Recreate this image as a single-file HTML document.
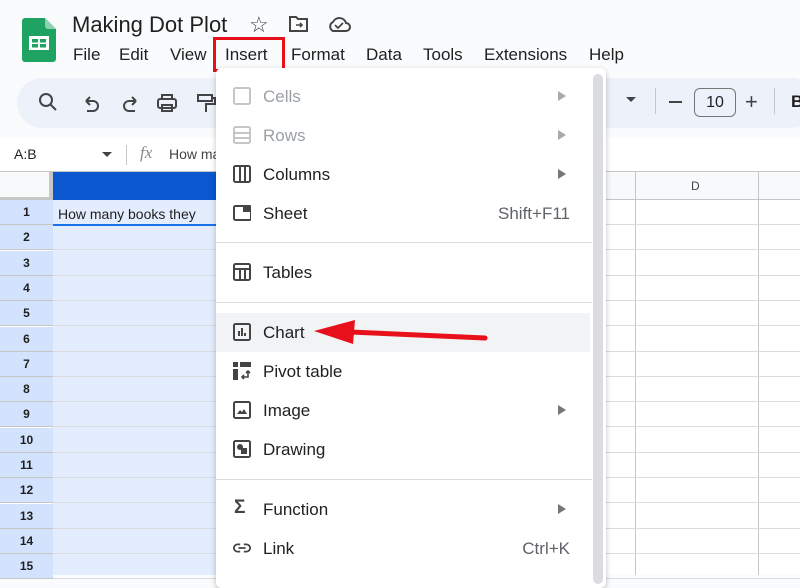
<!DOCTYPE html>
<html><head><style>
*{margin:0;padding:0;box-sizing:border-box}
body{width:800px;height:575px;overflow:hidden;background:#f9fbfd;font-family:"Liberation Sans",Arial,sans-serif;position:relative;color:#1f1f1f}
.abs{position:absolute}
.menuitem{position:absolute;left:0;width:376px;height:39px;font-size:17px;color:#202124}
.menuitem .t{position:absolute;left:47px;top:10px}
.menuitem .ic{position:absolute;left:17px;top:10px;width:18px;height:18px}
.menuitem .arr{position:absolute;right:26px;top:14px;width:0;height:0;border-left:8px solid #777;border-top:5px solid transparent;border-bottom:5px solid transparent}
.menuitem .sc{position:absolute;right:22px;top:10px;color:#5f6368}
.sep{position:absolute;left:0;width:376px;height:1px;background:#dadce0}
.rn{position:absolute;left:0;width:53px;height:25px;font-size:12px;font-weight:bold;color:#1f1f1f;text-align:center;line-height:25px;background:#d3e3fd;border-bottom:1px solid #c4c7c5}
</style></head><body>
<svg class="abs" style="left:22px;top:18px" width="34" height="44" viewBox="0 0 34 44"><path d="M3 0h20l11 11v30a3 3 0 0 1-3 3H3a3 3 0 0 1-3-3V3a3 3 0 0 1 3-3z" fill="#1ea362"/><path d="M23 0l11 11H26a3 3 0 0 1-3-3z" fill="#8ed1b1"/><rect x="7" y="18" width="20" height="14" fill="#fff"/><rect x="10" y="21" width="6" height="3.5" fill="#1ea362"/><rect x="18" y="21" width="6" height="3.5" fill="#1ea362"/><rect x="10" y="26" width="6" height="3.5" fill="#1ea362"/><rect x="18" y="26" width="6" height="3.5" fill="#1ea362"/></svg>
<div class="abs" style="left:72px;top:12px;font-size:22px;color:#1f1f1f">Making Dot Plot</div>
<div class="abs" style="left:249px;top:12px;font-size:22px;color:#444">☆</div>
<svg class="abs" style="left:289px;top:15px" width="20" height="18" viewBox="0 0 20 18"><path d="M1 2h6l2 2h9v12H1z" fill="none" stroke="#444" stroke-width="2"/><path d="M7 10h6M11 8l2 2-2 2" stroke="#444" stroke-width="1.6" fill="none"/></svg>
<svg class="abs" style="left:327px;top:15px" width="24" height="18" viewBox="0 0 24 18"><path d="M6 16h13a4 4 0 0 0 0-8 7 7 0 0 0-13-1A5 5 0 0 0 6 16z" fill="none" stroke="#444" stroke-width="2"/><path d="M8 10l3 3 5-5" fill="none" stroke="#444" stroke-width="1.8"/></svg>
<div class="abs" style="top:45px;left:73px;font-size:17px;color:#1f1f1f;white-space:nowrap">
<span class="abs" style="left:0">File</span><span class="abs" style="left:46px">Edit</span><span class="abs" style="left:97px">View</span><span class="abs" style="left:152px">Insert</span><span class="abs" style="left:218px">Format</span><span class="abs" style="left:293px">Data</span><span class="abs" style="left:350px">Tools</span><span class="abs" style="left:411px">Extensions</span><span class="abs" style="left:516px">Help</span></div>
<div class="abs" style="left:213px;top:37px;width:72px;height:35px;border:3px solid #e8101a"></div>
<div class="abs" style="left:17px;top:78px;width:800px;height:50px;background:#edf2fa;border-radius:25px"></div>
<svg class="abs" style="left:38px;top:92px" width="200" height="22" viewBox="0 0 200 22" fill="none" stroke="#444" stroke-width="2"><circle cx="8" cy="8" r="6"/><path d="M12 12l6 6"/><path d="M48 9h7a5 5 0 0 1 0 10h-6M48 9l4-4M48 9l4 4"/><path d="M98 9h-7a5 5 0 0 0 0 10h6M98 9l-4-4M98 9l-4 4"/><rect x="120" y="7" width="18" height="9" rx="2"/><rect x="124" y="3" width="10" height="4"/><rect x="124" y="13" width="10" height="6"/><rect x="160" y="3" width="14" height="6"/><path d="M174 6h3v6h-9v8"/></svg>
<div class="abs" style="left:626px;top:97px;width:0;height:0;border-top:5px solid #444;border-left:5px solid transparent;border-right:5px solid transparent"></div>
<div class="abs" style="left:655px;top:88px;width:1px;height:26px;background:#c7c7c7"></div>
<div class="abs" style="left:669px;top:101px;width:13px;height:2px;background:#444"></div>
<div class="abs" style="left:694px;top:88px;width:42px;height:29px;border:1px solid #747775;border-radius:6px;font-size:16px;text-align:center;line-height:27px">10</div>
<div class="abs" style="left:745px;top:89px;font-size:22px;color:#444">+</div>
<div class="abs" style="left:774px;top:88px;width:1px;height:26px;background:#c7c7c7"></div>
<div class="abs" style="left:791px;top:92px;font-size:17px;font-weight:bold">B</div>
<div class="abs" style="left:0;top:137px;width:800px;height:34px;background:#fff"></div>
<div class="abs" style="left:14px;top:146px;font-size:14px">A:B</div>
<div class="abs" style="left:102px;top:152px;border-top:5px solid #444;border-left:5px solid transparent;border-right:5px solid transparent"></div>
<div class="abs" style="left:126px;top:145px;width:1px;height:20px;background:#c7c7c7"></div>
<div class="abs" style="left:140px;top:143px;font-size:17px;font-style:italic;color:#888;font-family:'Liberation Serif',serif">fx</div>
<div class="abs" style="left:169px;top:146px;font-size:14px;color:#444">How ma</div>
<div class="abs" style="left:0;top:171px;width:800px;height:404px;background:#fff"></div>
<div class="abs" style="left:0;top:171px;width:800px;height:1px;background:#c4c7c5"></div>
<div class="abs" style="left:0;top:172px;width:53px;height:28px;background:#f8f9fa;border-right:4px solid #c4c7c5;border-bottom:3px solid #c4c7c5"></div>
<div class="abs" style="left:53px;top:172px;width:170px;height:28px;background:#0b57d0"></div>
<div class="abs" style="left:53px;top:200px;width:170px;height:375px;background:#e3edfd"></div>
<div class="abs" style="left:600px;top:172px;width:200px;height:28px;background:#f8f9fa;border-bottom:1px solid #c4c7c5"></div>
<div class="abs" style="left:635px;top:172px;width:1px;height:403px;background:#c4c7c5"></div>
<div class="abs" style="left:758px;top:172px;width:1px;height:403px;background:#c4c7c5"></div>
<div class="abs" style="left:691px;top:179px;font-size:12px;color:#444">D</div>
<div id="rows"></div>
<div class="abs" style="left:58px;top:206px;font-size:14px">How many books they</div>
<div class="abs" style="left:53px;top:224px;width:170px;height:2px;background:#1a73e8"></div>
<script>
var h='';for(var i=0;i<15;i++){var y=200+i*25.3;h+='<div class="rn" style="top:'+y+'px">'+(i+1)+'</div><div class="abs" style="left:53px;top:'+(y+24)+'px;width:747px;height:1px;background:#dadce0"></div>';}
document.getElementById('rows').innerHTML=h;
</script>
<div class="abs" style="left:216px;top:68px;width:390px;height:520px;background:#fff;border-radius:6px;box-shadow:0 2px 6px rgba(0,0,0,.25)">
<div class="abs" style="left:377px;top:6px;width:10px;height:510px;background:#dadce0;border-radius:5px"></div>
<div class="menuitem" style="top:9px;color:#9aa0a6"><svg class="ic" viewBox="0 0 18 18"><rect x="1" y="1" width="16" height="16" rx="1.5" fill="none" stroke="#c4c7c5" stroke-width="2"/></svg><span class="t">Cells</span><i class="arr" style="border-left-color:#aaa"></i></div>
<div class="menuitem" style="top:48px;color:#9aa0a6"><svg class="ic" viewBox="0 0 18 18"><rect x="1" y="1" width="16" height="16" rx="1.5" fill="none" stroke="#c4c7c5" stroke-width="2"/><path d="M1 7h16M1 12h16" stroke="#c4c7c5" stroke-width="2"/></svg><span class="t">Rows</span><i class="arr" style="border-left-color:#aaa"></i></div>
<div class="menuitem" style="top:87px"><svg class="ic" viewBox="0 0 18 18"><rect x="1" y="1" width="16" height="16" rx="1.5" fill="none" stroke="#444" stroke-width="2"/><path d="M7 1v16M12 1v16" stroke="#444" stroke-width="2"/></svg><span class="t">Columns</span><i class="arr"></i></div>
<div class="menuitem" style="top:126px"><svg class="ic" viewBox="0 0 18 18"><rect x="1" y="2" width="17" height="14" rx="1.5" fill="none" stroke="#444" stroke-width="2"/><rect x="10" y="2" width="8" height="6" fill="#444"/></svg><span class="t">Sheet</span><span class="sc">Shift+F11</span></div>
<div class="sep" style="top:174px"></div>
<div class="menuitem" style="top:185px"><svg class="ic" viewBox="0 0 18 18"><rect x="1" y="1" width="16" height="16" rx="1.5" fill="none" stroke="#444" stroke-width="2"/><path d="M1 6h16M7 6v11M12 6v11" stroke="#444" stroke-width="2"/></svg><span class="t">Tables</span></div>
<div class="sep" style="top:234px"></div>
<div class="menuitem" style="top:245px;background:#f1f3f4;width:374px"><svg class="ic" viewBox="0 0 18 18"><rect x="1" y="1" width="16" height="16" rx="1.5" fill="none" stroke="#444" stroke-width="2"/><path d="M6 13V8M9 13V5M12 13v-3" stroke="#444" stroke-width="2"/></svg><span class="t">Chart</span></div>
<div class="menuitem" style="top:284px"><svg class="ic" viewBox="0 0 18 18"><rect x="0" y="0" width="5" height="5" fill="#444"/><rect x="7" y="0" width="11" height="5" fill="#444"/><rect x="0" y="7" width="5" height="11" fill="#444"/><path d="M9 15h6V9M13 11l2-2 2 2M11 13l-2 2 2 2" stroke="#444" stroke-width="1.6" fill="none"/></svg><span class="t">Pivot table</span></div>
<div class="menuitem" style="top:323px"><svg class="ic" viewBox="0 0 18 18"><rect x="1" y="1" width="16" height="16" rx="1.5" fill="none" stroke="#444" stroke-width="2"/><path d="M4 13l3-4 2 2 2-3 3 5z" fill="#444"/></svg><span class="t">Image</span><i class="arr"></i></div>
<div class="menuitem" style="top:362px"><svg class="ic" viewBox="0 0 18 18"><rect x="1" y="1" width="16" height="16" rx="1.5" fill="none" stroke="#444" stroke-width="2"/><circle cx="7" cy="7" r="3" fill="#444"/><rect x="8" y="8" width="6" height="6" fill="#444"/></svg><span class="t">Drawing</span></div>
<div class="sep" style="top:411px"></div>
<div class="menuitem" style="top:422px"><span class="ic" style="font-size:19px;font-weight:bold;top:7px;left:18px;color:#444">Σ</span><span class="t">Function</span><i class="arr"></i></div>
<div class="menuitem" style="top:461px"><svg class="ic" viewBox="0 0 20 18"><path d="M8 5H5a4 4 0 0 0 0 8h3M12 5h3a4 4 0 0 1 0 8h-3M6 9h8" stroke="#444" stroke-width="2" fill="none"/></svg><span class="t">Link</span><span class="sc">Ctrl+K</span></div>
</div>
<svg class="abs" style="left:310px;top:318px" width="180" height="30" viewBox="0 0 180 30"><path d="M175 20L40 14" stroke="#e8101a" stroke-width="5" stroke-linecap="round"/><path d="M4 13L45 2L43 26z" fill="#e8101a"/></svg>
</body></html>
